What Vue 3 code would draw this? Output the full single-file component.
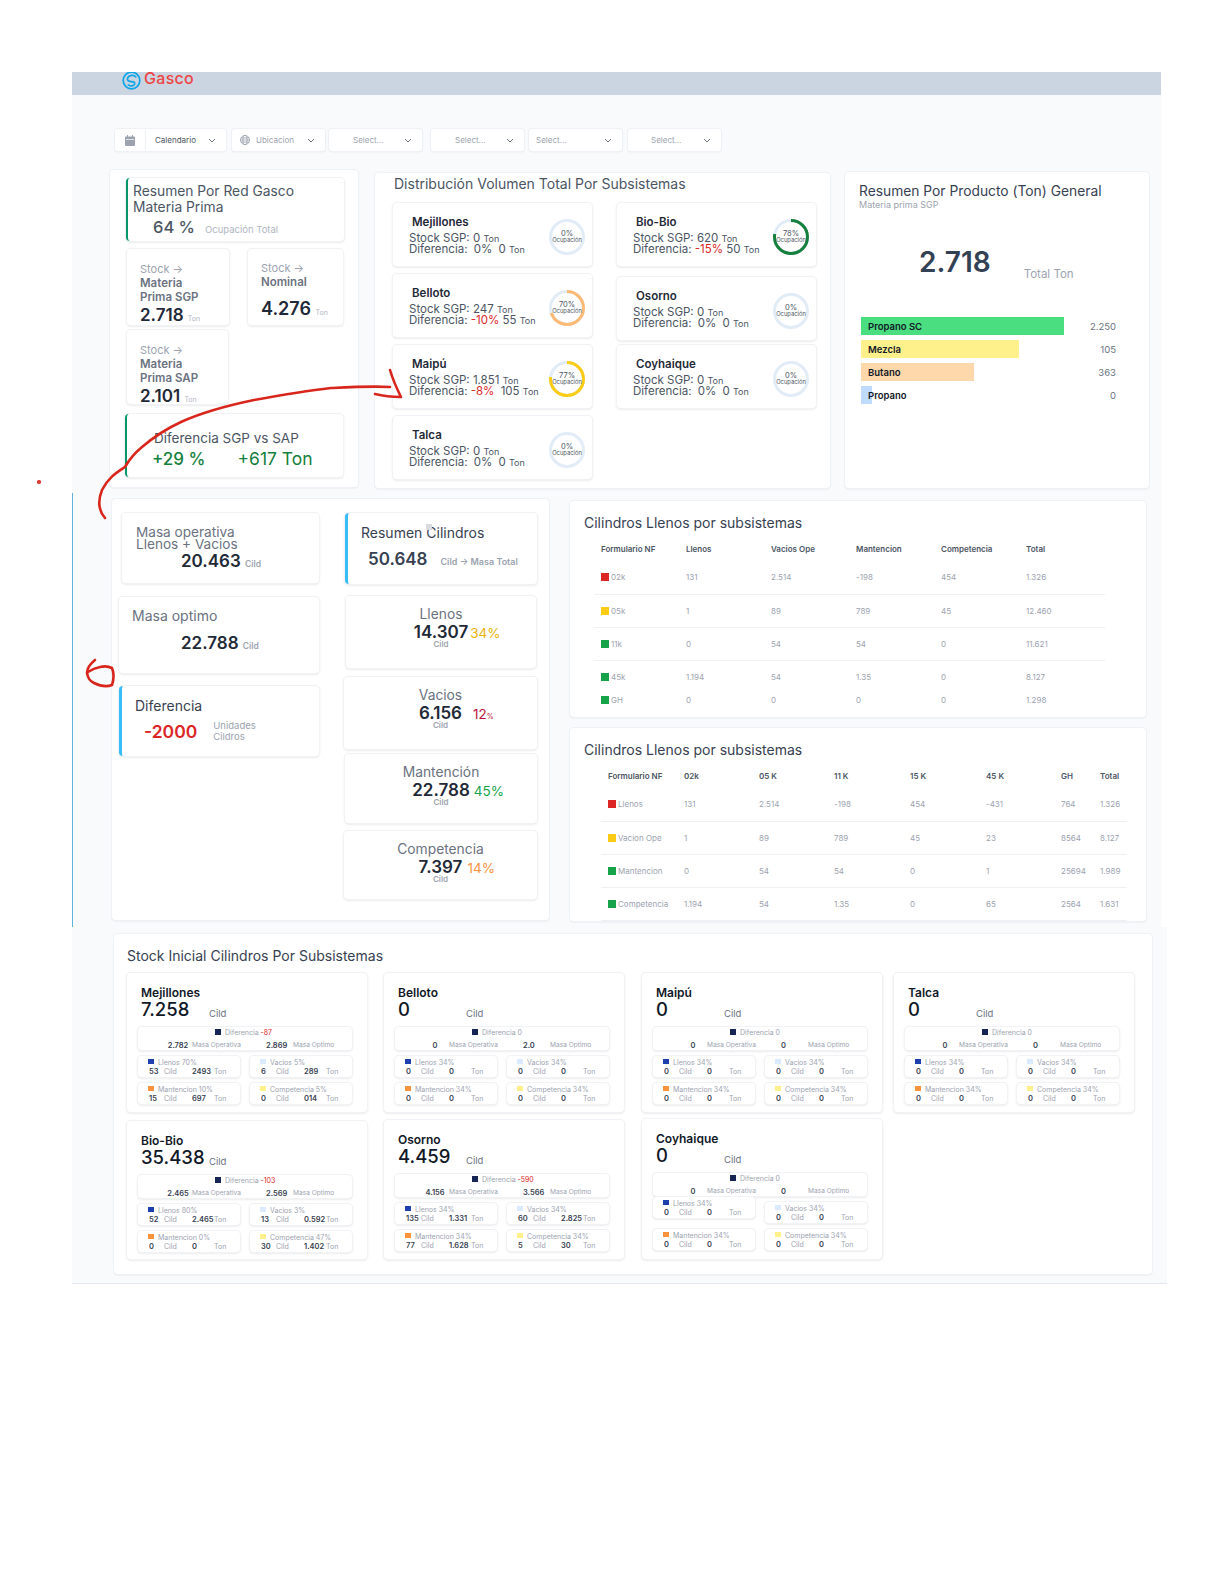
<template>
  <div class="page">
    <div class="top">
      <header class="header">
        <svg class="logo-icon" width="19" height="19" viewBox="0 0 24 24" fill="none" stroke="#0ea5e9" stroke-width="2.2" stroke-linecap="round">
          <circle cx="12" cy="12" r="10.5" />
          <path d="M17.5 7.5C15 4.5 8.5 5 7 9c-1 3 2 4.5 5 4.5s4.5 1 4 3c-.8 2.5-5 3.200-8 1" />
        </svg>
        <span class="logo-text">Gasco</span>
      </header>

      <!-- FILTROS -->
      <div class="filters">
        <div class="filter filter-wide">
          <span class="filter-icon">
            <svg width="10" height="11" viewBox="0 0 10 11"><path d="M0 2.500A1 1 0 0 1 1 1.500h8a1 1 0 0 1 1 1V10a1 1 0 0 1-1 1H1a1 1 0 0 1-1-1z" fill="#9ca3af" /><path d="M2.500 0v2.500M7.500 0v2.500" stroke="#9ca3af" /><path d="M1 4.500h8" stroke="#fff" stroke-width=".7" /></svg>
          </span>
          <span class="filter-text dark">Calendario</span>
          <svg class="chev" width="8" height="5" viewBox="0 0 8 5" fill="none" stroke="#6b7280"><path d="M1 1l3 3 3-3" /></svg>
        </div>
        <div class="filter filter-ubic">
          <svg width="10" height="10" viewBox="0 0 12 12" fill="none" stroke="#9ca3af"><circle cx="6" cy="6" r="5.500" /><ellipse cx="6" cy="6" rx="2.500" ry="5.500" /><path d="M.5 6h11M1.200 3.500h9.600M1.200 8.500h9.600" /></svg>
          <span class="filter-text">Ubicacion</span>
          <svg class="chev" width="8" height="5" viewBox="0 0 8 5" fill="none" stroke="#6b7280"><path d="M1 1l3 3 3-3" /></svg>
        </div>
        <div v-for="(s, i) in selects" :key="i" class="filter" :class="s">
          <span class="filter-text">Select...</span>
          <svg class="chev" width="8" height="5" viewBox="0 0 8 5" fill="none" stroke="#6b7280"><path d="M1 1l3 3 3-3" /></svg>
        </div>
      </div>

      <div class="row-one">
        <!-- RESUMEN RED -->
        <section class="card red-card">
          <div class="box accent-green resumen-red">
            <div class="resumen-title">Resumen Por Red Gasco<br />Materia Prima</div>
            <div class="resumen-occ"><span class="occ-num">64 %</span><span class="occ-label">Ocupación Total</span></div>
          </div>
          <div class="stock-grid">
            <div class="box stock-box">
              <div class="stock-arrow">Stock →</div>
              <div class="stock-name">Materia<br />Prima SGP</div>
              <div class="stock-val">2.718 <small>Ton</small></div>
            </div>
            <div class="box stock-box nominal">
              <div class="stock-arrow">Stock →</div>
              <div class="stock-name">Nominal</div>
              <div class="stock-val big">4.276 <small>Ton</small></div>
            </div>
            <div class="box stock-box short">
              <div class="stock-arrow">Stock →</div>
              <div class="stock-name">Materia<br />Prima SAP</div>
              <div class="stock-val">2.101 <small>Ton</small></div>
            </div>
          </div>
          <div class="box accent-green dif-box">
            <div class="dif-title">Diferencia SGP vs SAP</div>
            <div class="dif-nums"><span>+29 %</span><span>+617 Ton</span></div>
          </div>
        </section>

        <!-- DISTRIBUCION -->
        <section class="card dist-card">
          <h2 class="dist-title">Distribución Volumen Total Por Subsistemas</h2>
          <div class="dist-cols">
            <div v-for="(col, c) in distCols" :key="c" class="dist-col" :class="'col-' + c">
              <div v-for="d in col" :key="d.name" class="box dist-item">
                <div class="dist-info">
                  <div class="dist-name">{{ d.name }}</div>
                  <div class="dist-line">Stock SGP: {{ d.stock }} <small>Ton</small></div>
                  <div class="dist-line">Diferencia: <span class="dist-pct" :class="{ neg: d.dif !== '0%', wide: d.wide }">{{ d.dif }}</span> {{ d.ton }} <small>Ton</small></div>
                </div>
                <svg class="ring" width="36" height="36" viewBox="0 0 36 36">
                  <circle cx="18" cy="18" r="16.500" fill="none" stroke="#e2ecf7" stroke-width="3" />
                  <circle
                    cx="18" cy="18" r="16.500" fill="none" :stroke="d.color" stroke-width="3"
                    pathLength="100" :stroke-dasharray="d.pct + ' 100'" transform="rotate(-90 18 18)"
                  />
                  <text x="18" y="17" text-anchor="middle" class="ring-pct">{{ d.pct }}%</text>
                  <text x="18" y="23" text-anchor="middle" class="ring-label">Ocupación</text>
                </svg>
              </div>
            </div>
          </div>
        </section>

        <!-- PRODUCTO -->
        <section class="card prod-card">
          <h2 class="prod-title">Resumen Por Producto (Ton) General</h2>
          <div class="prod-sub">Materia prima SGP</div>
          <div class="prod-total"><span class="prod-num">2.718</span><span class="prod-unit">Total Ton</span></div>
          <div class="bars">
            <div v-for="b in bars" :key="b.name" class="bar-row">
              <div class="bar-track">
                <div class="bar-fill" :style="{ width: b.w + 'px', background: b.color }"></div>
                <span class="bar-name">{{ b.name }}</span>
              </div>
              <span class="bar-val">{{ b.val }}</span>
            </div>
          </div>
        </section>
      </div>

      <div class="row-two">
        <!-- CILINDROS -->
        <section class="card cil-card">
          <div class="cil-left">
            <div class="box masa-op">
              <div class="masa-label tight">Masa operativa<br />Llenos + Vacios</div>
              <div class="masa-val">20.463 <small>Cild</small></div>
            </div>
            <div class="box masa-opt">
              <div class="masa-label">Masa optimo</div>
              <div class="masa-val">22.788 <small>Cild</small></div>
            </div>
            <div class="box accent-blue masa-dif">
              <div class="masa-label darker">Diferencia</div>
              <div class="dif-row"><span class="dif-red">-2000</span><span class="dif-unit">Unidades<br />Cildros</span></div>
            </div>
          </div>
          <div class="cil-right">
            <div class="box accent-blue res-cil">
              <div class="masa-label darker">Resumen Cilindros</div>
              <div class="res-row"><span class="res-num">50.648</span><span class="res-unit">Cild → Masa Total</span></div>
              <i class="stray"></i>
            </div>
            <div v-for="k in kinds" :key="k.name" class="box kind-box" :class="k.cls">
              <div class="kind-name">{{ k.name }}</div>
              <div class="kind-row">
                <span class="kind-num">{{ k.val }}</span>
                <span class="kind-pct" :style="{ color: k.color, marginLeft: k.gap + 'px' }">{{ k.pct }}<small v-if="k.tiny">%</small><template v-else>%</template></span>
              </div>
              <div class="kind-unit">Cild</div>
            </div>
          </div>
        </section>

        <!-- TABLAS -->
        <div class="tables">
          <section class="card table-card first">
            <h2 class="section-title">Cilindros Llenos por subsistemas</h2>
            <table class="tbl tbl-a">
              <thead><tr><th v-for="h in headA" :key="h">{{ h }}</th></tr></thead>
              <tbody>
                <tr v-for="r in rowsA" :key="r.label">
                  <td><i class="sq" :style="{ background: r.color }"></i>{{ r.label }}</td>
                  <td v-for="(v, i) in r.vals" :key="i">{{ v }}</td>
                </tr>
              </tbody>
            </table>
          </section>
          <section class="card table-card second">
            <h2 class="section-title">Cilindros Llenos por subsistemas</h2>
            <table class="tbl tbl-b">
              <colgroup><col v-for="(w, i) in colsB" :key="i" :style="{ width: w + 'px' }" /></colgroup>
              <thead><tr><th v-for="h in headB" :key="h">{{ h }}</th></tr></thead>
              <tbody>
                <tr v-for="r in rowsB" :key="r.label">
                  <td><i class="sq" :style="{ background: r.color }"></i>{{ r.label }}</td>
                  <td v-for="(v, i) in r.vals" :key="i">{{ v }}</td>
                </tr>
              </tbody>
            </table>
          </section>
        </div>
      </div>
    </div>

    <!-- STOCK INICIAL -->
    <div class="bottom">
      <section class="card stock-card">
        <h2 class="section-title">Stock Inicial Cilindros Por Subsistemas</h2>
        <div class="sub-grid">
          <div v-for="s in subs" :key="s.name" class="box sub-card">
            <div class="sub-name">{{ s.name }}</div>
            <div class="sub-total"><span class="sub-num">{{ s.total }}</span><span class="sub-unit">Cild</span></div>
            <div class="box sub-dif">
              <div class="sub-dif-top"><i class="mini-sq navy"></i>Diferencia <span :class="{ neg: s.dif !== '0' }">{{ s.dif }}</span></div>
              <div class="sub-dif-bot">
                <b class="center">{{ s.op }}</b><span>Masa Operativa</span><b>{{ s.opt }}</b><span>Masa Optimo</span>
              </div>
            </div>
            <div class="mini-grid">
              <div v-for="m in s.minis" :key="m.label" class="box mini">
                <div class="mini-top"><i class="mini-sq" :style="{ background: m.color }"></i>{{ m.label }} {{ m.pct }}%</div>
                <div class="mini-bot"><b>{{ m.cild }}</b><span>Cild</span><b>{{ m.ton }}</b><span>Ton</span></div>
              </div>
            </div>
          </div>
        </div>
      </section>
    </div>

    <!-- ANOTACIONES A MANO -->
    <svg class="notes" width="1224" height="1584" viewBox="0 0 1224 1584" fill="none" stroke="#d9261c" stroke-width="2.600" stroke-linecap="round" stroke-linejoin="round">
      <path d="M105 518C98 510 98 500 102 490C108 478 116 473 125 467C130 458 136 452 142 447C155 436 168 428 181 422C205 411 230 405 254 400C282 395 306 391 331 388C352 387 372 386 390 387" />
      <path d="M390 370C393 380 397 389 401 397C392 397 383 396 375 394" />
      <path d="M95 660C90 664 87 668 87 673C88 679 90 681 94 683C100 686 107 687 112 685C114 679 114 673 112 668C108 666 104 666 100 667C95 668 91 670 88 672" />
      <circle cx="39" cy="482" r=".8" fill="#d9261c" />
    </svg>
  </div>
</template>

<script setup>
const selects = ['sel-a', 'sel-b', 'sel-c', 'sel-d']

const distCols = [
  [
    { name: 'Mejillones', stock: '0', dif: '0%', ton: '0', pct: 0, color: '#e2ecf7' },
    { name: 'Belloto', stock: '247', dif: '-10%', ton: '55', pct: 70, color: '#fdba74' },
    { name: 'Maipú', stock: '1.851', dif: '-8%', ton: '105', pct: 77, color: '#facc15', wide: true },
    { name: 'Talca', stock: '0', dif: '0%', ton: '0', pct: 0, color: '#e2ecf7' },
  ],
  [
    { name: 'Bio-Bio', stock: '620', dif: '-15%', ton: '50', pct: 78, color: '#15803d' },
    { name: 'Osorno', stock: '0', dif: '0%', ton: '0', pct: 0, color: '#e2ecf7' },
    { name: 'Coyhaique', stock: '0', dif: '0%', ton: '0', pct: 0, color: '#e2ecf7' },
  ],
]

const bars = [
  { name: 'Propano SC', w: 203, color: '#4ade80', val: '2.250' },
  { name: 'Mezcla', w: 158, color: '#fef08a', val: '105' },
  { name: 'Butano', w: 113, color: '#fed7aa', val: '363' },
  { name: 'Propano', w: 11, color: '#bfdbfe', val: '0' },
]

const kinds = [
  { name: 'Llenos', val: '14.307', pct: '34', color: '#eab308', gap: 2, cls: 'k-llenos' },
  { name: 'Vacios', val: '6.156', pct: '12', color: '#be123c', gap: 11, tiny: true, cls: 'k-vacios' },
  { name: 'Mantención', val: '22.788', pct: '45', color: '#16a34a', gap: 4, cls: 'k-mant' },
  { name: 'Competencia', val: '7.397', pct: '14', color: '#fb923c', gap: 5, cls: 'k-comp' },
]

const red = '#dc2626'
const yellow = '#facc15'
const green = '#16a34a'

const headA = ['Formulario NF', 'Llenos', 'Vacios Ope', 'Mantencion', 'Competencia', 'Total']
const rowsA = [
  { label: '02k', color: red, vals: ['131', '2.514', '-198', '454', '1.326'] },
  { label: '05k', color: yellow, vals: ['1', '89', '789', '45', '12.460'] },
  { label: '11k', color: green, vals: ['0', '54', '54', '0', '11.621'] },
  { label: '45k', color: green, vals: ['1.194', '54', '1.35', '0', '8.127'] },
  { label: 'GH', color: green, vals: ['0', '0', '0', '0', '1.298'] },
]

const colsB = [83, 75, 75, 76, 76, 75, 39, 27]
const headB = ['Formulario NF', '02k', '05 K', '11 K', '15 K', '45 K', 'GH', 'Total']
const rowsB = [
  { label: 'Llenos', color: red, vals: ['131', '2.514', '-198', '454', '-431', '764', '1.326'] },
  { label: 'Vacion Ope', color: yellow, vals: ['1', '89', '789', '45', '23', '8564', '8.127'] },
  { label: 'Mantencion', color: green, vals: ['0', '54', '54', '0', '1', '25694', '1.989'] },
  { label: 'Competencia', color: green, vals: ['1.194', '54', '1.35', '0', '65', '2564', '1.631'] },
]

const miniColors = { Llenos: '#1e40af', Vacios: '#dbeafe', Mantencion: '#fb923c', Competencia: '#fef08a' }

// [pct, cild, ton] en el orden Llenos, Vacios, Mantencion, Competencia
function minis(list) {
  return ['Llenos', 'Vacios', 'Mantencion', 'Competencia'].map((label, i) => ({
    label,
    color: miniColors[label],
    pct: list[i][0],
    cild: list[i][1],
    ton: list[i][2],
  }))
}

const empty = [[34, '0', '0'], [34, '0', '0'], [34, '0', '0'], [34, '0', '0']]

const subs = [
  { name: 'Mejillones', total: '7.258', dif: '-87', op: '2.782', opt: '2.869', minis: minis([[70, '53', '2493'], [5, '6', '289'], [10, '15', '697'], [5, '0', '014']]) },
  { name: 'Belloto', total: '0', dif: '0', op: '0', opt: '2.0', minis: minis(empty) },
  { name: 'Maipú', total: '0', dif: '0', op: '0', opt: '0', minis: minis(empty) },
  { name: 'Talca', total: '0', dif: '0', op: '0', opt: '0', minis: minis(empty) },
  { name: 'Bio-Bio', total: '35.438', dif: '-103', op: '2.465', opt: '2.569', minis: minis([[80, '52', '2.465'], [3, '13', '0.592'], [0, '0', '0'], [47, '30', '1.402']]) },
  { name: 'Osorno', total: '4.459', dif: '-590', op: '4.156', opt: '3.566', minis: minis([[34, '135', '1.331'], [34, '60', '2.825'], [34, '77', '1.628'], [34, '5', '30']]) },
  { name: 'Coyhaique', total: '0', dif: '0', op: '0', opt: '0', minis: minis(empty) },
]
</script>

<style>
body { background: #fff; }
</style>

<style scoped>
.page {
  position: relative;
  width: 1224px;
  height: 1584px;
  padding-top: 72px;
  box-sizing: border-box;
  overflow: hidden;
  background: #fff;
  font-family: Inter, "Liberation Sans", sans-serif;
  color: #374151;
}
.top { margin-left: 72px; width: 1089px; height: 855px; background: #f8fafc; }
.bottom {
  margin-left: 72px;
  width: 1095px;
  height: 357px;
  padding: 7px 0 0 42px;
  box-sizing: border-box;
  background: #f8fafc;
  border-bottom: 1px solid #e2e8f0;
}
.card, .box {
  background: #fff;
  border-radius: 4px;
  box-sizing: border-box;
}
.card { box-shadow: 0 0 0 1px #eef1f5, 0 1px 2px rgba(0,0,0,.12); }
.box { box-shadow: 0 0 0 1px #f0f2f5, 0 1px 3px rgba(0,0,0,.16); }
.accent-green { border-left: 2px solid #059669; }
.accent-blue { border-left: 3px solid #38bdf8; }
.neg { color: #dc2626; }

/* HEADER */
.header {
  height: 23px;
  background: #cbd5e1;
  display: flex;
  align-items: center;
  padding-left: 50px;
  overflow: hidden;
}
.logo-icon { margin-top: -7px; flex-shrink: 0; }
.logo-text {
  margin: -11px 0 0 3px;
  font-size: 16px;
  line-height: 16px;
  font-weight: 500;
  letter-spacing: .3px;
  color: #ef4444;
}

/* FILTROS */
.filters {
  display: flex;
  gap: 6px;
  margin-top: 34px;
  padding-left: 43px;
}
.filter {
  width: 93px;
  height: 22px;
  display: flex;
  align-items: center;
  box-sizing: border-box;
  background: #fff;
  border-radius: 3px;
  box-shadow: 0 0 0 1px #eef1f5, 0 1px 2px rgba(0,0,0,.1);
  padding: 0 10px 0 24px;
  font-size: 8px;
  color: #9ca3af;
}
.filter-wide { width: 111px; padding-left: 0; }
.filter-ubic { padding-left: 8px; gap: 6px; }
.filter-icon {
  width: 30px;
  height: 22px;
  display: flex;
  align-items: center;
  justify-content: center;
  border-right: 1px solid #eef1f5;
  margin-right: 9px;
}
.sel-a { margin-left: -2px; }
.sel-b { margin-left: 3px; }
.sel-c { margin-left: -1px; padding-left: 7px; }
.sel-d { padding-left: 23px; }
.dark { color: #4b5563; }
.chev { margin-left: auto; flex-shrink: 0; }

/* FILA 1 */
.row-one {
  display: flex;
  align-items: flex-start;
  margin-top: 19px;
  padding-left: 38px;
}
.red-card { width: 248px; height: 317px; padding: 8px 15px 0; }
.resumen-red { width: 218px; height: 63px; margin-left: 1px; padding: 5px 0 0 5px; }
.resumen-title { font-size: 13.800px; line-height: 16px; color: #4b5563; }
.resumen-occ { display: flex; align-items: baseline; padding-left: 20px; margin-top: 2px; }
.occ-num { font-size: 16.500px; color: #4b5563; font-weight: 500; }
.occ-label { font-size: 9.500px; color: #b0b6bf; margin-left: 10px; }
.stock-grid {
  display: grid;
  grid-template-columns: 102px 95px;
  grid-template-rows: 76px 74px;
  gap: 5px 19px;
  margin: 8px 0 0 2px;
}
.stock-box { padding: 13px 0 0 13px; }
.stock-arrow { font-size: 11px; line-height: 14px; color: #9ca3af; }
.stock-name { font-size: 11.500px; line-height: 14px; font-weight: 600; color: #6b7280; }
.stock-val { font-size: 17px; line-height: 20px; font-weight: 600; color: #1f2937; margin-top: 1px; white-space: nowrap; }
.stock-val small { font-size: 7px; font-weight: 400; color: #b0b6bf; }
.nominal { padding-top: 12px; }
.stock-val.big { font-size: 18px; margin-top: 10px; }
.short { width: 101px; padding-top: 13px; }
.dif-box { width: 218px; height: 63px; margin-top: 10px; padding: 15px 0 0 27px; }
.dif-title { font-size: 13.500px; line-height: 18px; color: #4b5563; }
.dif-nums {
  display: flex;
  gap: 32px;
  margin-left: -2px;
  font-size: 17px;
  line-height: 24px;
  font-weight: 500;
  color: #15803d;
}
.dif-nums span + span { font-weight: 400; font-size: 17.500px; }

/* DISTRIBUCION */
.dist-card { width: 455px; height: 315px; margin: 3px 0 0 17px; padding-left: 18px; }
.dist-title { margin: 0 0 8px 1px; font-size: 14px; line-height: 22px; font-weight: 400; color: #4b5563; }
.dist-cols { display: flex; gap: 25px; }
.dist-col { width: 199px; display: flex; flex-direction: column; gap: 8px; }
.col-1 .dist-item:nth-child(2) { margin-top: 3px; }
.col-1 .dist-item:nth-child(3) { margin-top: -3px; }
.dist-item { height: 63px; display: flex; align-items: flex-start; padding: 12px 7px 0 16px; }
.dist-info { flex: 1; min-width: 0; white-space: nowrap; }
.dist-name { font-size: 11.500px; line-height: 14px; font-weight: 600; color: #1f2937; padding-left: 3px; margin-bottom: 4px; }
.dist-line { font-size: 11.500px; line-height: 11px; color: #4b5563; }
.dist-line small { font-size: 9px; }
.dist-pct { margin: 0 3px 0 3px; }
.dist-pct.neg { margin: 0; }
.dist-pct.neg.wide { margin: 0 3px 0 0; }
.ring { flex-shrink: 0; margin-top: 4px; }
.ring-pct { font: 7.500px Inter, sans-serif; fill: #4b5563; }
.ring-label { font: 5.800px Inter, sans-serif; fill: #4b5563; }

/* PRODUCTO */
.prod-card { width: 304px; height: 316px; margin: 2px 0 0 15px; padding: 10px 0 0 14px; }
.prod-title { margin: 0; font-size: 13.800px; line-height: 18px; font-weight: 400; color: #374151; }
.prod-sub { font-size: 9px; line-height: 10px; color: #9ca3af; }
.prod-total { display: flex; margin: 34px 0 0 60px; align-items: flex-end; }
.prod-num { font-size: 28px; line-height: 36px; font-weight: 600; color: #334155; }
.prod-unit { font-size: 11.500px; line-height: 14px; color: #9ca3af; margin: 0 0 -1px 33px; }
.bars { display: flex; flex-direction: column; gap: 5px; margin: 37px 0 0 2px; }
.bar-row { display: flex; align-items: center; width: 255px; }
.bar-track { position: relative; flex: 1; height: 18px; display: flex; align-items: center; }
.bar-fill { position: absolute; left: 0; top: 0; height: 18px; }
.bar-name { position: relative; padding-left: 7px; font-size: 9.500px; font-weight: 600; color: #111827; }
.bar-val { font-size: 9.500px; color: #6b7280; }

/* FILA 2 */
.row-two {
  display: flex;
  align-items: flex-start;
  height: 434px;
  margin-top: 5px;
  padding: 6px 0 0 39px;
  box-sizing: border-box;
  border-left: 1px solid #5fb4d8;
}
.cil-card { width: 437px; height: 421px; display: flex; flex-shrink: 0; padding-top: 14px; }
.cil-left { width: 207px; padding-left: 7px; flex-shrink: 0; box-sizing: border-box; }
.cil-right { width: 195px; margin-left: 26px; display: flex; flex-direction: column; flex-shrink: 0; }
.masa-op { width: 197px; height: 70px; margin-left: 3px; padding: 14px 0 0 14px; }
.masa-opt { width: 200px; height: 76px; margin-top: 14px; padding: 10px 0 0 13px; }
.masa-dif { width: 200px; height: 70px; margin-top: 13px; padding: 11px 0 0 13px; }
.masa-label { font-size: 14px; line-height: 18px; color: #6b7280; }
.masa-label.tight { font-size: 13.600px; line-height: 11.500px; }
.masa-label.darker { color: #374151; }
.masa-val { font-size: 17px; line-height: 22px; font-weight: 600; color: #1f2937; white-space: nowrap; }
.masa-val small { font-size: 8.500px; font-weight: 600; color: #9ca3af; }
.masa-op .masa-val { margin: 0 0 0 45px; }
.masa-opt .masa-val { margin: 7px 0 0 49px; }
.dif-row { display: flex; align-items: center; margin-top: 5px; padding-left: 9px; }
.dif-red { font-size: 17.500px; font-weight: 600; color: #dc2626; }
.dif-unit { margin-left: 16px; font-size: 9.500px; line-height: 11px; color: #9ca3af; }
.res-cil { position: relative; width: 192px; height: 71px; padding: 11px 0 0 13px; }
.res-row { display: flex; align-items: baseline; margin-top: 7px; padding-left: 7px; }
.res-num { font-size: 17px; font-weight: 600; color: #374151; }
.res-unit { margin-left: 13px; font-size: 9px; font-weight: 600; color: #9ca3af; white-space: nowrap; }
.stray { position: absolute; left: 78px; top: 11px; width: 6px; height: 6px; background: #d9dbde; }
.kind-box { text-align: center; padding-top: 10px; }
.k-llenos { height: 72px; margin-top: 12px; width: 190px; margin-left: 1px; }
.k-vacios { height: 72px; margin-top: 9px; width: 193px; margin-left: -1px; }
.k-mant { height: 69px; margin-top: 5px; width: 192px; }
.k-comp { height: 68px; margin-top: 8px; width: 193px; margin-left: -1px; }
.kind-name { font-size: 13.800px; line-height: 16px; color: #6b7280; }
.kind-row { position: relative; display: inline-block; line-height: 16px; }
.kind-num { font-size: 17px; font-weight: 600; color: #1f2937; }
.kind-pct { position: absolute; left: 100%; top: 1px; font-size: 13.500px; white-space: nowrap; }
.kind-pct small { font-size: 7px; }
.kind-unit { font-size: 8px; line-height: 10px; font-weight: 600; color: #9ca3af; margin-top: -3px; }

/* TABLAS */
.tables { width: 576px; margin: 2px 0 0 21px; flex-shrink: 0; display: flex; flex-direction: column; gap: 11px; }
.table-card { padding: 13px 0 0 14px; overflow: hidden; }
.first { height: 216px; }
.second { height: 193px; }
.section-title { margin: 0; font-size: 14px; line-height: 18px; font-weight: 400; color: #374151; }
.tbl { border-collapse: collapse; table-layout: fixed; font-size: 8px; color: #9ca3af; }
.tbl th { text-align: left; font-weight: 600; color: #4b5563; padding: 0; white-space: nowrap; }
.tbl td { padding: 0; white-space: nowrap; }
.tbl th:first-child, .tbl td:first-child { padding-left: 7px; }
.tbl tbody tr { height: 33px; border-bottom: 1px solid #eef0f3; }
.tbl tbody tr:last-child { border-bottom: none; }
.tbl-a { width: 511px; margin: 4px 0 0 10px; }
.tbl-a th { height: 25px; width: 85px; }
.tbl-a th:last-child { width: 79px; }
.tbl-a tbody tr:nth-child(4) { border-bottom: none; }
.tbl-a tbody tr:last-child { height: 14px; }
.tbl-b { width: 526px; margin: 4px 0 0 17px; }
.tbl-b th { height: 25px; }
.tbl-b tbody tr:last-child { border-bottom: 1px solid #eef0f3; }
.sq {
  display: inline-block;
  width: 8px;
  height: 8px;
  margin-right: 2px;
  vertical-align: -1px;
}

/* STOCK INICIAL */
.stock-card { width: 1038px; height: 340px; padding: 13px 0 0 13px; }
.sub-grid {
  display: grid;
  grid-template-columns: 257px 258px 252px 240px;
  grid-template-rows: 139px 138px;
  row-gap: 9px;
  margin-top: 8px;
}
.sub-card { width: 240px; padding: 13px 15px 0 11px; }
.sub-card:nth-child(6) { margin-top: -1px; }
.sub-card:nth-child(7) { margin-top: -2px; }
.sub-name { font-size: 12px; line-height: 14px; font-weight: 600; color: #111827; padding-left: 3px; }
.sub-total { display: flex; align-items: flex-end; height: 18px; padding-left: 3px; }
.sub-num { width: 68px; font-size: 18.500px; line-height: 18px; font-weight: 500; color: #111827; }
.sub-unit { font-size: 9.500px; line-height: 10px; color: #6b7280; margin-bottom: -1px; }
.sub-dif { height: 23px; margin-top: 9px; font-size: 7px; color: #9ca3af; white-space: nowrap; }
.sub-dif-top { padding: 1px 0 0 77px; line-height: 9px; }
.sub-dif-bot {
  display: grid;
  grid-template-columns: 28px 74px 27px auto;
  padding-left: 26px;
  margin-top: 4px;
  line-height: 9px;
  font-size: 6.600px;
}
.sub-dif-bot b { font-size: 7.500px; font-weight: 600; color: #374151; }
.sub-dif-bot b.center { text-align: center; }
.mini-grid {
  display: grid;
  grid-template-columns: 102px 102px;
  grid-auto-rows: 21px;
  gap: 6px 10px;
  margin-top: 6px;
}
.sub-card:nth-child(7) .mini:first-child { height: 21px; align-self: start; margin-top: -5px; }
.mini { font-size: 7px; color: #9ca3af; white-space: nowrap; padding: 2px 0 0 10px; }
.mini-top { line-height: 9px; }
.mini-sq { display: inline-block; width: 6px; height: 5px; margin-right: 4px; vertical-align: 1px; }
.mini-sq.navy { background: #172554; height: 6px; margin-right: 4px; vertical-align: 0; }
.mini-bot {
  display: grid;
  grid-template-columns: 15px 28px 22px auto;
  padding-left: 1px;
  line-height: 9px;
}
.mini-bot b { font-size: 7.500px; font-weight: 600; color: #374151; }

.notes { position: absolute; left: 0; top: 0; pointer-events: none; }
</style>
